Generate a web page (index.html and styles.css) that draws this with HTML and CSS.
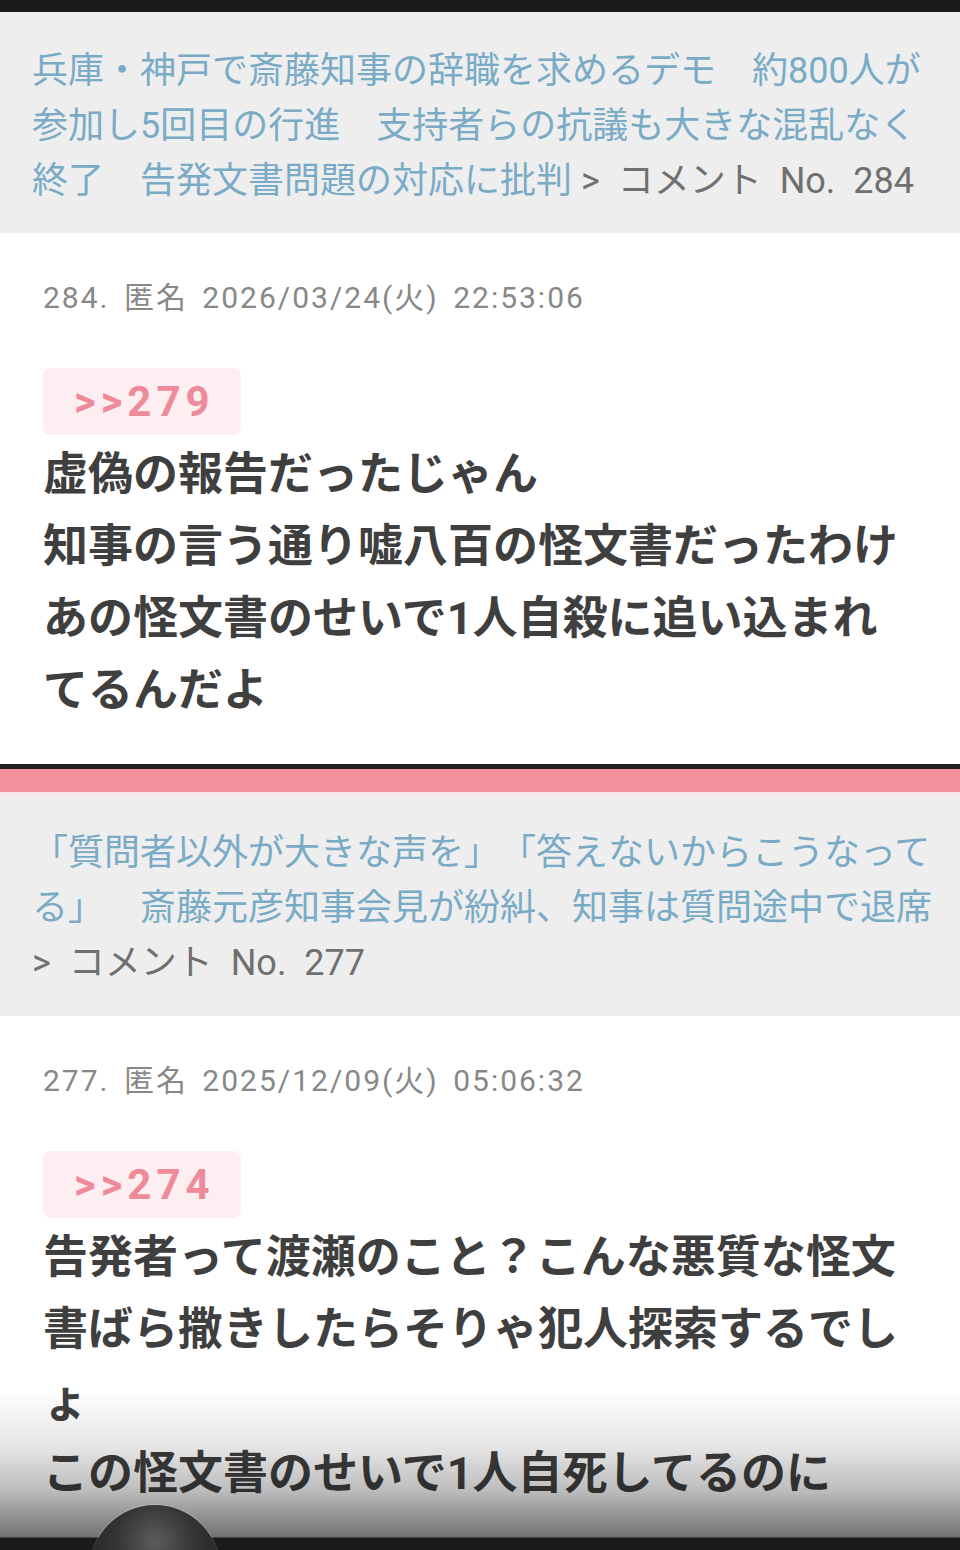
FILE: index.html
```html
<!DOCTYPE html>
<html lang="ja">
<head>
  <title>コメント</title>
  <meta charset="utf-8" />
  <meta name="viewport" content="width=device-width, initial-scale=1.0" />
  <link rel="stylesheet" href="styles.css">
</head>
<body>
<div class="statusbar"></div>

<div class="thread">
  <div class="thread-title first">
    <a class="title-link" href="#">兵庫・神戸で斎藤知事の辞職を求めるデモ　約800人が参加し5回目の行進　支持者らの抗議も大きな混乱なく終了　告発文書問題の対応に批判</a> <span class="crumb">&gt; コメント No. 284</span>
  </div>
  <div class="comment">
    <div class="meta">284. 匿名 2026/03/24(火) 22:53:06</div>
    <a class="anchor" href="#">&gt;&gt;279</a>
    <p class="body">虚偽の報告だったじゃん<br/>知事の言う通り嘘八百の怪文書だったわけ<br/>あの怪文書のせいで1人自殺に追い込まれてるんだよ</p>
  </div>
</div>

<div class="divider"></div>

<div class="thread">
  <div class="thread-title">
    <a class="title-link" href="#">「質問者以外が大きな声を」「答えないからこうなってる」　斎藤元彦知事会見が紛糾、知事は質問途中で退席</a> <span class="crumb">&gt; コメント No. 277</span>
  </div>
  <div class="comment">
    <div class="meta">277. 匿名 2025/12/09(火) 05:06:32</div>
    <a class="anchor" href="#">&gt;&gt;274</a>
    <p class="body">告発者って渡瀬のこと？こんな悪質な怪文書ばら撒きしたらそりゃ犯人探索するでしょ<br/>この怪文書のせいで1人自死してるのに</p>
  </div>
</div>

<div class="shade"></div>
<div class="fab"></div>
</body>
</html>
```

FILE: styles.css
```css
html, body {
  margin:0;
  padding:0;
}

body {
  font-family:Roboto, 'Noto Sans CJK JP', sans-serif;
  background:#fff;
  height:1550px;
  overflow:hidden;
  text-spacing-trim:space-all;
  line-break:normal;
}

p {
  margin:0;
}

a {
  text-decoration:none;
}

.statusbar {
  height:12px;
  background:#1b1b1b;
}

.thread-title {
  background:#eeeeee;
  padding:29px 20px 25px 32px;
  font-size:36px;
  line-height:55px;
  font-weight:400;
}

.thread-title.first {
  padding-top:32px;
  padding-bottom:24px;
}

.title-link {
  color:#79abc6;
}

.crumb {
  color:#707070;
  word-spacing:9px;
}

.comment {
  padding:45px 40px 37px 43px;
}

.meta {
  font-size:30px;
  line-height:40px;
  color:#888;
  letter-spacing:2px;
  word-spacing:5px;
}

.anchor {
  display:inline-block;
  margin-top:50px;
  height:67px;
  line-height:67px;
  padding:0 26px 0 31px;
  border-radius:8px;
  background:#fdeef1;
  color:#ef8a9b;
  font-size:42px;
  font-weight:700;
  letter-spacing:5px;
}

.body {
  margin-top:4px;
  font-size:45px;
  line-height:72px;
  font-weight:700;
  color:#3f3f3f;
}

.divider {
  height:23px;
  background:#f2909b;
  border-top:5px solid #202020;
  border-bottom:5px solid #f6e5e9;
}

/* bottom fade of the screen grab */
.shade {
  position:fixed;
  left:0;
  right:0;
  bottom:0;
  height:160px;
  background:linear-gradient(to bottom,
    rgba(0,0,0,0) 0,
    rgba(0,0,0,0.11) 60px,
    rgba(0,0,0,0.26) 100px,
    rgba(0,0,0,0.45) 130px,
    rgba(0,0,0,0.55) 147px,
    #1b1b1b 148px);
}

.fab {
  position:fixed;
  left:90px;
  top:1505px;
  width:130px;
  height:130px;
  border-radius:50%;
  background:radial-gradient(circle at 50% 28%, #5c5c5c 0, #343434 35%, #232323 70%);
  box-shadow:0 0 0 1px rgba(255,255,255,0.18);
}
```
